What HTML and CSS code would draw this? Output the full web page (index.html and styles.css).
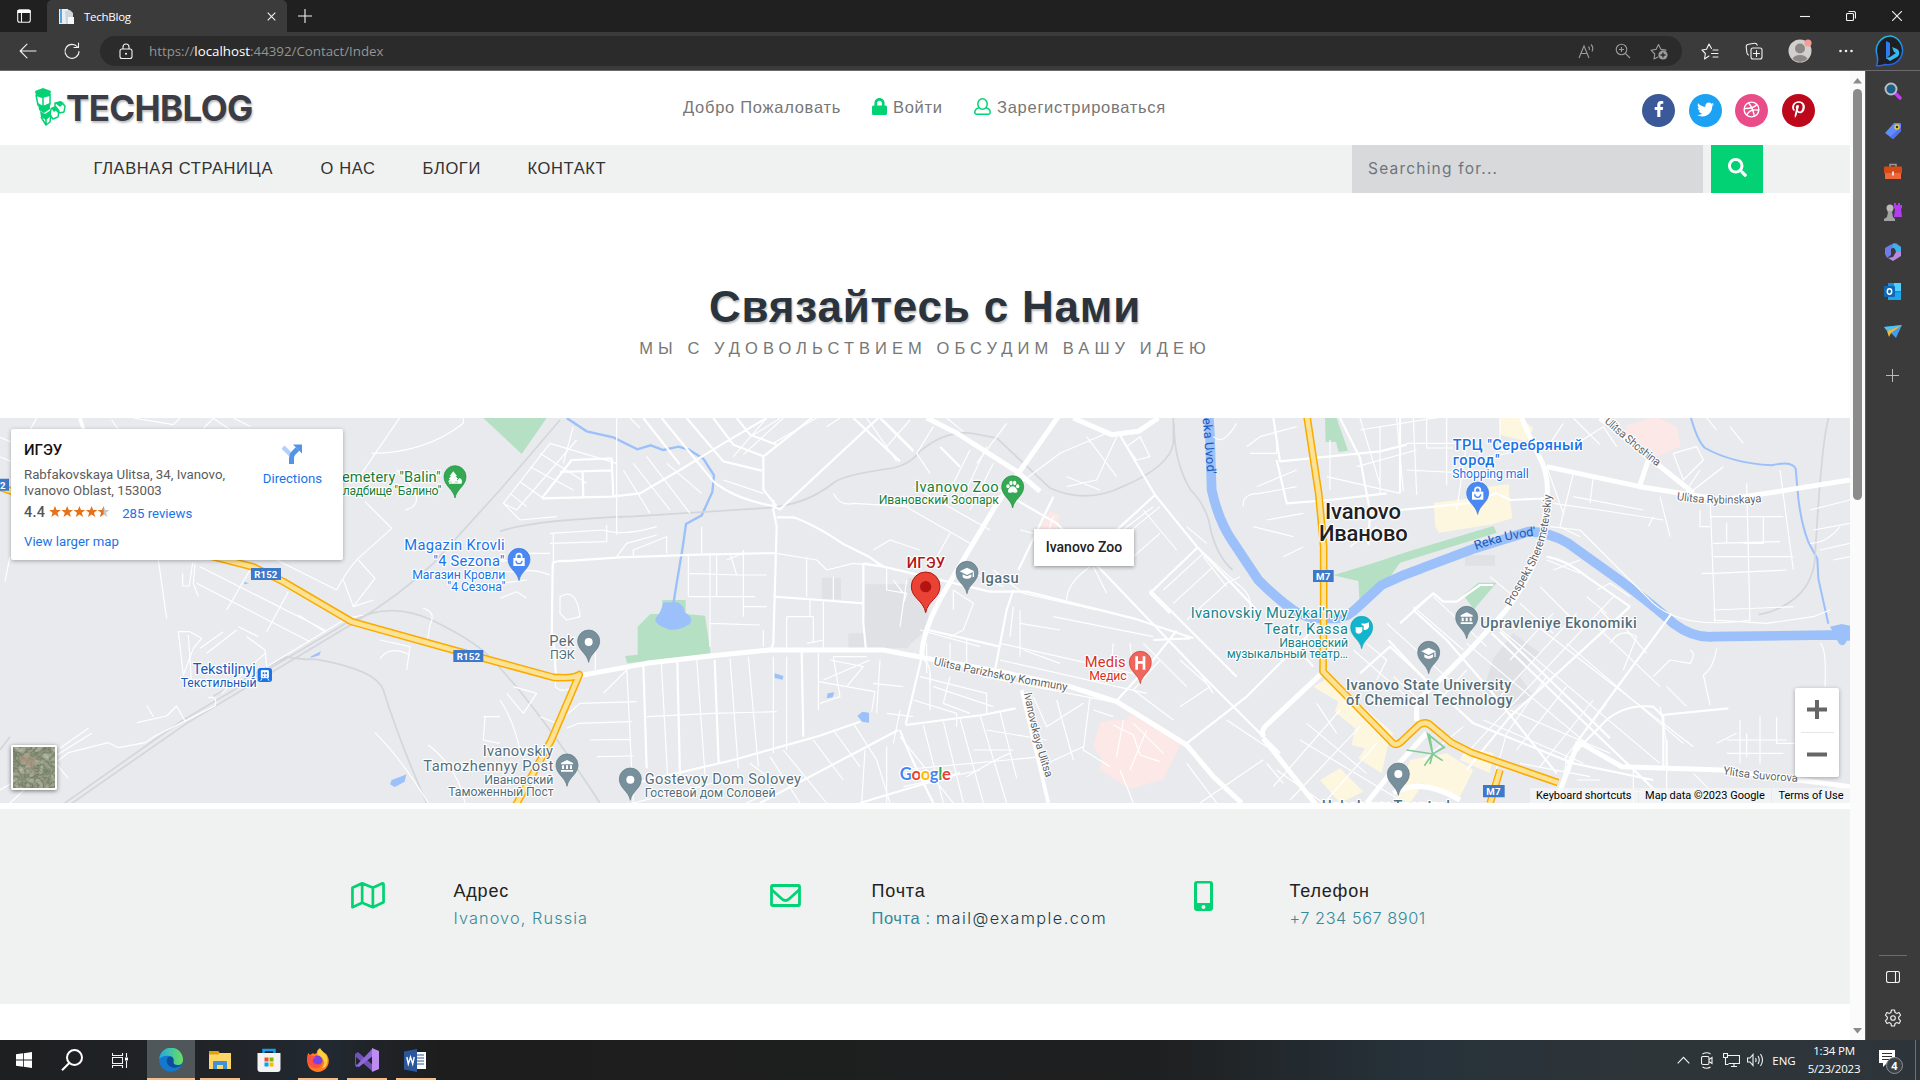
FILE: index.html
```html
<!DOCTYPE html>
<html lang="ru">
<head>
<meta charset="utf-8">
<title>TechBlog</title>
<link rel="stylesheet" href="styles.css">
</head>
<body>
<div class="window">
  <div class="titlebar">
    <span class="cell tab-menu"><svg width="14" height="14" viewBox="0 0 14 14"><rect x=".7" y=".7" width="12.6" height="12.6" rx="2" class="w-line"/><path d="M.5 1h13v3H.5z" fill="#fff"/><path d="M4.5 4v9" class="w-line"/></svg></span>
    <div class="tab">
      <svg width="16" height="17" viewBox="0 0 16 17"><path d="M1 1h9l1 2v13H1z" fill="#e9eef2"/><path d="M2 1h2v14H2z" fill="#5aa5d8"/><path d="M7 3l5-1 3 3v11H8z" fill="#cfd6db"/><path d="M10 9h6v7h-6z" fill="#f5f7f8"/></svg>
      <span class="tab-title">TechBlog</span>
      <svg class="tab-close" width="9" height="9" viewBox="0 0 9 9"><path d="M.7.7l7.6 7.6M8.3.7L.7 8.3" class="w-line"/></svg>
    </div>
    <span class="cell new-tab"><svg width="14" height="14" viewBox="0 0 14 14"><path d="M7 0v14M0 7h14" class="w-line"/></svg></span>
    <span class="grow"></span>
    <span class="cell win-btn"><svg width="10" height="10" viewBox="0 0 10 10"><path d="M0 5.5h10" class="w-line"/></svg></span>
    <span class="cell win-btn"><svg width="10" height="10" viewBox="0 0 10 10"><rect x=".5" y="2.5" width="7" height="7" rx="1" class="w-line"/><path d="M2.5.5h5a2 2 0 0 1 2 2v5" class="w-line"/></svg></span>
    <span class="cell win-btn"><svg width="10" height="10" viewBox="0 0 10 10"><path d="M0 0l10 10M10 0L0 10" class="w-line"/></svg></span>
  </div>

  <div class="toolbar">
    <span class="cell back"><svg width="18" height="16" viewBox="0 0 18 16"><path d="M17 8H1.500M8 1.200L1.200 8 8 14.800" class="w-line r"/></svg></span>
    <span class="cell refresh"><svg width="18" height="18" viewBox="0 0 18 18"><path d="M16 9.500A7 7 0 1 1 14.500 5M15.500 1v4.500H11" class="w-line r"/></svg></span>
    <div class="address">
      <svg width="14" height="17" viewBox="0 0 14 17"><rect x="1" y="6" width="12" height="9.500" rx="2" class="w-line"/><path d="M4 6V4a3 3 0 0 1 6 0v2" class="w-line"/><circle cx="7" cy="10.700" r="1" fill="#fff"/></svg>
      <span class="url">https://<b>localhost</b>:44392/Contact/Index</span>
      <span class="grow"></span>
      <span class="addr-icons">
        <svg width="18" height="16" viewBox="0 0 18 16"><path d="M1 15L6 3l5 12M2.800 10.500h6.500M10.500 3.500c1 1 1 2.500.8 3.500M13 1.500c2 2 2 5 1 7" class="g-line"/></svg>
        <svg width="16" height="16" viewBox="0 0 16 16"><circle cx="6.500" cy="6.500" r="5.300" class="g-line"/><path d="M10.500 10.500L15 15M6.500 4v5M4 6.500h5" class="g-line"/></svg>
        <svg width="18" height="17" viewBox="0 0 18 17"><path d="M8 14l-4 2 .8-5L1 7.200l5-.8L8.500 1.500 11 6.400l5 .7" class="g-line r"/><circle cx="13" cy="12" r="4.600" fill="#9b9b9b"/><path d="M13 9.500v5M10.500 12h5" stroke="#2b2b2b" stroke-width="1.300"/></svg>
      </span>
    </div>
    <span class="cell t-fav"><svg width="18" height="17" viewBox="0 0 18 17"><path d="M8 13l-4.500 3 .9-5.500L1 7l4.500-.8L8 1l2.500 4.500M12 7h5M10.500 10.500H17M12 14h5" class="w-line r"/></svg></span>
    <span class="cell t-col"><svg width="18" height="18" viewBox="0 0 18 18"><rect x="6" y="6" width="11" height="11" rx="2" class="w-line"/><path d="M11.500 8.500v6M8.500 11.500h6M3.500 13A2.500 2.500 0 0 1 2 11L1.200 5A2.500 2.500 0 0 1 3.500 2.200l6-1a2.500 2.500 0 0 1 2.700 2" class="w-line r"/></svg></span>
    <span class="cell t-ava"><svg width="24" height="24" viewBox="0 0 24 24"><circle cx="12" cy="12" r="11.500" fill="#d2cfcc"/><circle cx="12" cy="9.500" r="5" fill="#8c8886"/><path d="M4.500 20a8 6 0 0 1 15 0 11 11 0 0 1-15 0" fill="#8c8886"/><circle cx="20" cy="4" r="3.600" fill="#f99a94"/></svg></span>
    <span class="cell t-dots"><svg width="14" height="4" viewBox="0 0 14 4"><circle cx="1.500" cy="2" r="1.300" fill="#eee"/><circle cx="7" cy="2" r="1.300" fill="#eee"/><circle cx="12.500" cy="2" r="1.300" fill="#eee"/></svg></span>
    <span class="cell t-bing"><svg width="32" height="32" viewBox="0 0 32 32"><defs><linearGradient id="bg" x1="0" y1="0" x2=".3" y2="1"><stop offset="0" stop-color="#1fc8e8"/><stop offset="1" stop-color="#2a5fe0"/></linearGradient></defs><path d="M16 1A14.500 14.500 0 1 1 10 29.500Q5 31.500 1.500 30.500 3.500 26 2 20A14.500 14.500 0 0 1 16 1z" fill="#1d1f23" stroke="url(#bg)" stroke-width="1.500"/><path d="M11 6l4 2v12l-4 4z" fill="#2f7bf0"/><path d="M11 23l4 3 7-4c3-2 3-6 0-8l-5-2 2 5 2 1-6 4z" fill="#35b9ef"/></svg></span>
  </div>

  <div class="middle">
    <div class="viewport">
      <div class="page">
        <header class="top">
          <div class="logo">
            <svg width="31" height="38" viewBox="0 0 31 38"><path d="M0 3L8 0l8 3-1 5-8 2-6-2z" fill="#03d274"/><path d="M1 7l2 10 5 2 7-3V6M8 9v9" class="grn"/><path d="M3 15l5 3 7-3v6l-6 4-5-3zM5 23l5 3 6-4v6l-5 4-5-3z" fill="#03d274"/><path d="M4 18l5 3 6-4M6 29l5 8 4-3 1-7M11 31v6M20 15l6-1 4 4-1 6-5 1-4-4zM16 21l5-2 3 4-1 6-5 2-3-4z" class="grn"/><path d="M20 15l5-2 4 2-4 4zM16 20l4-2 3 3-4 3z" fill="#03d274"/></svg>
            <span>TECHBLOG</span>
          </div>
          <div class="top-links">
            <span>Добро Пожаловать</span>
            <span class="with-icon"><svg width="15" height="17" viewBox="0 0 448 512" preserveAspectRatio="none"><path fill="#03d274" d="M400 224h-24v-72C376 68.200 307.800 0 224 0S72 68.200 72 152v72H48c-26.500 0-48 21.500-48 48v192c0 26.500 21.500 48 48 48h352c26.500 0 48-21.500 48-48V272c0-26.500-21.500-48-48-48zm-104 0H152v-72c0-39.700 32.300-72 72-72s72 32.300 72 72v72z"/></svg>Войти</span>
            <span class="with-icon"><svg width="17" height="17" viewBox="0 0 17 17"><ellipse cx="8.500" cy="6" rx="4.700" ry="5.200" class="grn thin"/><path d="M5 9.700C1.500 10.500.8 12.500.8 14.500a1.700 1.700 0 0 0 1.800 1.700h11.800a1.700 1.700 0 0 0 1.800-1.700c0-2-.7-4-4.200-4.800" class="grn thin"/></svg>Зарегистрироваться</span>
          </div>
          <div class="social">
            <a class="fb"><svg width="10" height="16" viewBox="0 0 320 512"><path fill="#fff" d="M279.140 288l14.220-92.660h-88.910v-60.130c0-25.350 12.420-50.060 52.240-50.060h40.420V6.260S260.430 0 225.360 0c-73.220 0-121.080 44.380-121.080 124.720v70.620H22.890V288h81.390v224h100.170V288z"/></svg></a>
            <a class="tw"><svg width="17" height="17" viewBox="0 0 512 512"><path fill="#fff" d="M459.370 151.716c.325 4.548.325 9.097.325 13.645 0 138.720-105.583 298.558-298.558 298.558-59.452 0-114.680-17.219-161.137-47.106 8.447.974 16.568 1.299 25.340 1.299 49.055 0 94.213-16.568 130.274-44.832-46.132-.975-84.792-31.188-98.112-72.772 6.498.974 12.995 1.624 19.818 1.624 9.421 0 18.843-1.300 27.614-3.573-48.081-9.747-84.143-51.980-84.143-102.985v-1.299c13.969 7.797 30.214 12.670 47.431 13.319-28.264-18.843-46.781-51.005-46.781-87.391 0-19.492 5.197-37.360 14.294-52.954 51.655 63.675 129.300 105.258 216.365 109.807-1.624-7.797-2.599-15.918-2.599-24.040 0-57.828 46.782-104.934 104.934-104.934 30.213 0 57.502 12.670 76.670 33.137 23.715-4.548 46.456-13.320 66.599-25.340-7.798 24.366-24.366 44.833-46.132 57.827 21.117-2.273 41.584-8.122 60.426-16.243-14.292 20.791-32.161 39.308-52.628 54.253z"/></svg></a>
            <a class="dr"><svg width="17" height="17" viewBox="0 0 17 17" fill="none" stroke="#fff" stroke-width="1.400"><circle cx="8.500" cy="8.500" r="7.400"/><path d="M1.200 7.500C6 7.700 11 7 13.800 3.500M5.500 1.700C9 6 10.500 10 11.300 15.200M3.700 14C6 9.500 10.500 8.200 15.800 9.300"/></svg></a>
            <a class="pi"><svg width="13" height="17" viewBox="0 0 384 512"><path fill="#fff" d="M204 6.500C101.400 6.500 0 74.900 0 185.600 0 256 39.600 296 63.600 296c9.900 0 15.600-27.600 15.600-35.400 0-9.300-23.700-29.100-23.700-67.800 0-80.400 61.200-137.400 140.400-137.400 68.100 0 118.500 38.700 118.500 109.800 0 53.100-21.300 152.700-90.300 152.700-24.900 0-46.200-18-46.200-43.800 0-37.800 26.400-74.400 26.400-113.400 0-66.200-93.900-54.200-93.900 25.800 0 16.800 2.100 35.400 9.600 50.700-13.800 59.400-42 147.900-42 209.100 0 18.900 2.700 37.500 4.500 56.400 3.400 3.800 1.700 3.400 6.900 1.500 50.400-69 48.600-82.500 71.400-172.800 12.300 23.400 44.100 36 69.300 36 106.200 0 153.900-103.500 153.900-196.800C384 71.300 298.200 6.500 204 6.500z"/></svg></a>
          </div>
        </header>

        <nav class="nav">
          <div class="menu"><a>ГЛАВНАЯ СТРАНИЦА</a><a>О НАС</a><a>БЛОГИ</a><a>КОНТАКТ</a></div>
          <div class="search"><div class="field">Searching for...</div><div class="go"><svg width="19" height="19" viewBox="0 0 512 512"><path fill="#fff" d="M505 442.700L405.300 343c-4.500-4.500-10.600-7-17-7H372c27.600-35.300 44-79.700 44-128C416 93.100 322.900 0 208 0S0 93.100 0 208s93.100 208 208 208c48.300 0 92.700-16.400 128-44v16.300c0 6.400 2.500 12.500 7 17l99.700 99.700c9.400 9.400 24.600 9.400 33.900 0l28.300-28.300c9.400-9.400 9.400-24.600.1-34zM208 336c-70.700 0-128-57.200-128-128 0-70.700 57.200-128 128-128 70.700 0 128 57.200 128 128 0 70.700-57.200 128-128 128z"/></svg></div></div>
        </nav>

        <section class="hero">
          <h1>Связайтесь с Нами</h1>
          <p>МЫ С УДОВОЛЬСТВИЕМ ОБСУДИМ ВАШУ ИДЕЮ</p>
        </section>

        <section class="map">
          <svg class="map-art" width="1850" height="385" viewBox="0 24 5550 1155">
            <defs>
              <path id="pin" d="M0 64C-5 36-33 28-33 0A33 33 0 1 1 33 0C33 28 5 36 0 64Z"/>
              <g id="cap" fill="#fff"><path d="M-22-6L0-17 22-6 0 5z"/><path d="M-13 3v9q13 9 26 0V3L0 9zM17-3h4v14h-4z"/></g>
              <g id="bank" fill="#fff"><path d="M-18-9L0-18 18-9v4h-36zM-15-2h6v11h-6zM-3-2h6v11h-6zM9-2h6v11H9zM-18 12h36v5h-36z"/></g>
              <g id="bag"><path d="M-17-6h34v24h-34z" fill="#fff"/><path d="M-8-6v-5a8 8 0 0 1 16 0v5" fill="none" stroke="#fff" stroke-width="5"/><path d="M-9 2a9 9 0 0 0 18 0" fill="none" stroke="#4a89f3" stroke-width="4"/></g>
              <path id="prospekt" d="M4534 590Q4560 540 4592 488Q4650 390 4654 250"/>
              <path id="reka2" d="M4428 420Q4510 388 4615 376"/>
              <path id="reka1" d="M3606 0Q3614 110 3622 196"/>
              <path id="parizh" d="M2800 764Q3000 810 3205 843"/>
              <path id="ivul" d="M3072 850Q3095 980 3140 1110"/>
              <path id="shosh" d="M4812 36Q4880 100 4975 172"/>
              <path id="ryb" d="M5030 270Q5150 288 5288 276"/>
              <path id="suv" d="M5168 1093Q5280 1110 5395 1116"/>
            </defs>
            <rect y="0" width="5550" height="1200" fill="#e8eaed"/>

            <!-- built-up blocks, hospitals and shops -->
            <path fill="#dfe1e5" d="M2595 523h130v-20l60 10v140l-65 60-70-5-60 5zM2465 503h58v65h-58zM2545 670h180v45h-180zM4395 435h90v32h-90zM4480 745l60-75 80 60-60 70 40 60-80 40-70-60z"/>
            <path fill="#fce8e6" d="M3150 304l28 12-8 44h-55zM3300 938l45-10 30 5 15-20 155 85-55 110-100 30-92-60 10-25-28-45zM4880 45l90-25 60 30 12 60-90 38-30-50-45-15z"/>
            <path fill="#fef7e0" d="M4302 278l100-12 55-35 70-8v22l10 80-60 18-160 25-12-20zM4500 24h60l40 30-20 40-80-20zM3940 830l50-30 190 170-15 30-20 90-70-45 20-30-40-10 10-50-60-50 10-30zM3960 1110l60-35 70 70-70 34zM4230 1050l110-20 80 50-40 80-110-40-40 60-40-20zM4400 1010l80 20-10 60-90-40z"/>

            <!-- parks -->
            <path fill="#b5e0c3" d="M1450 24h190l-75 108zM1875 738l38-4V650l38-38h36v-42h70v42l58 5 17 113-250 30zM3975 24h35l34 98-28 4-8-30h-31zM4000 496l130-40 90-30 100-30 160-48 10 20-160 50-130 40-70 100-50 35-5-80zM4390 556l45-38h55l-68 80z"/>

            <!-- water -->
            <path fill="none" stroke="#9cc0f9" stroke-width="29" stroke-linejoin="round" d="M3625 0l5 80 5 160q20 90 60 150l80 120q70 70 120 100l40 15h80q30-5 60-35l70-65q60-30 120-50l160-60 160-50q60 0 120 35l160 115q100 75 155 125 60 45 120 40l350-5 60 3"/>
            <path fill="#9cc0f9" d="M5490 650l35-8 25 5v42h-8q-10 25-25 12l-10-20zM1990 577h42q20 8 22 30 30 18 15 35-30 20-60 17-50-15-42-35 16-15 23-47zM1175 1110l32-12 12-5-5 22-30 16-14-8zM935 738l28-14-5 12-28 8zM733 515l14 5-14 3zM2324 790l26 8-2 11-24-5zM2483 850l20-3-5 15-18 3zM2572 918l15-13 20 3v30l-20-3z"/>
            <g fill="none" stroke="#9cc0f9" stroke-width="7">
              <path d="M1700 24l60 40 80 18 72 36 40-12 38 14 45-10 30 8 45 28 32 50-5 50-32 70-47 26-10 70-20 120-8 50"/>
              <path d="M5073 24q20 70 42 90 80 45 200 52 60-15 72 10l8 90q10 80 30 130l27 50 3 60 30 135" stroke-width="6"/>
            </g>

            <!-- railways -->
            <g fill="none" stroke="#d3d6da" stroke-width="5">
              <path d="M0 1330L560 940 1060 640Q1200 555 1300 460L1500 240 1680 30M0 1316L540 936 1050 632M640 858L860 740Q900 750 950 748 1130 780 1150 840 1200 1000 1280 1179M1060 632q110-60 240 0 120 60 160 100 140 140 340 447M0 1020l30-40"/>
              <path d="M1500 364q100-35 400-45l400-25q120-10 200-75 30-25 180-45 50-10 80-50 70-60 150-55l80 15 160 150q110 50 220-5 140-60 150-130V24M3522 40q0 120 50 200 50 50 60 120 20 80 66 120M5486 24q-20 60-40 400 0 90-60 140-50 40-110 50"/>
            </g>

            <!-- residential streets -->
            <g fill="none" stroke="#fff" stroke-width="3.500" stroke-linejoin="round">
              <path d="M475 450l25 175M110 24L90 60M335 30q30 50 70 55M400 24l120 20 20-20M610 55l30-30 60 40M700 24l50 25M0 82l35 15M0 140l35 15M30 440L15 515"/>
              <path d="M600 470l375 190M590 520l340 175M585 460l-5 60 15 40M680 600l70-120M800 665l65-120M830 450l180 90M1010 540q30-60 65-95l100-90-80-80M1075 450l50 55-65 85 60-20M1060 590l-30-80M548 490v38h20l10-70M535 665l15 130 30-80 25-30-35-20zM565 675l10 150M600 715l70-50M620 730l90-70M715 650l60 30M800 770l-5-50-55-40M665 850l130-120M975 665l-80-50M800 770l240-145 50-10"/>
              <path d="M1215 0l-130 190M1215 300q80-20-25-120M1115 130q160 0 275-90V24M410 938l90-20 30-30 25 45 90-45q10-30-20-25M555 933l-90 45-30 20-80 15-30-15-120 30-90 70M440 885l20 35M170 1050L30 1179M265 955l-85 60M275 970L155 1045l50 60M0 1140l140-80M1125 968q80 80 160 211M1285 1005q90 70 110 174M1140 690l90 20-10 70M1140 745q30-40 90-10M1270 595q40 10 20 50l-10 60M1450 920h50M1455 920l-5 70 50 10"/>
              <path d="M1650 100l200 60M1620 130l140 90M1590 170l130 70M1560 215l70 50M1530 250l50 40M1650 100l-140 180M1850 24v350M1730 90l-180 210-40-20 50 50 110-10M1720 50l-30 110M1870 180l80 130M1900 160l110 140M1940 140l130 170M2000 160l105 90M1890 24l30 30M2170 210l120 40M2300 24L2200 140M2350 24l-120 110"/>
              <path d="M2600 24l90 130M2480 50l40-26M2320 100l130-76M2260 75l80-50M2660 110l70-80M2740 120l-90-90M1650 370l160-10q60 20 160-10M1650 400l170-5V345M1650 430l-120 0M1660 370v110M1850 440l30-40 90-25M1900 440v-20l100-40v50M2105 430v-80M2065 430v130h200M2065 490l150 5M2130 430v280M2150 430v130M2190 430l20 65h90M2230 420v200M2230 590h70M2230 490v-60l-50 20M2130 640l150 5M2290 660v50M2330 430l120 20 30 30 80-20 90 10M2420 440v120M2470 570v150M2360 620v100M2360 620h80v80M2430 570v50M2420 700l50-10M2500 500v70M2660 470v70l60 10-10 30M2680 510l30 40M1500 485h60q40-10 90 10M1500 520l80-10M1500 565l50-20 30 20M1680 560q50-30 60 60l-40 10-20-20zM1580 440l-80 15"/>
              <path d="M1666 800v30q30 30 70-20M1786 780v-60M1740 880l170-5M1810 850l70-70M1740 880l-70 60-50-20M1700 955l35-15 160-5M1770 990l120-2M1790 1040l110-2M1500 870q40 60 60 150M1520 850l50 60 40-60-70-20M1880 770l20 409M1984 760l20 360M2090 745l25 350M2190 745l25 330M2245 740l30 330M1940 920l200-10 190-5M2320 740v290M2360 740v280M2455 730v170M2455 815l170 30-10 60M2470 810l140-60M2640 750l-10 160M2540 830l50-60-100-20M2620 820l90 10M2500 740l20 120-60 20M2660 910l80 10M2700 900l-20 100M2740 730q60 20 50 90M2600 740h-100"/>
              <path d="M2740 870l130 40v40M2760 800l200 50v60M2800 830l180 60M2790 900v-110M2850 800l-20 80 80 30M1900 1179l280-70M2250 1060l80 60M2310 1040l90 139M2350 1020l130 159M2440 990l90 120M2500 960l80 110M2560 940l70 110M2585 1179l10-160M2660 1179v-170M2300 1150l-60 29M2630 1050l40 129M2700 980l160 199M2770 945l60 234M2830 935l60 244M2880 925l70 254M2940 915l80 264M3000 905l50 200M2700 1080l430-40M2710 1130l230-50M2920 1020l120 0"/>
              <path d="M2840 24l50 40M2790 190l-40-60 50-80M2840 260l70-140M2880 280l80-170M2910 300l70-140M2700 280l210 120M2740 230l230 130M2500 250q20 40 60 30l170 10M2620 420l50-30 90 30M2850 370l-50 90M2880 470l130 60M2860 600v-60l60 40-30 80-40 20M2700 650l20-140M2760 660l180 50M2780 700v90M2850 700v70M2900 690v90"/>
              <path d="M3020 40l-90 120M3060 220l120-90 140-60M3200 200l100 40M3380 110l40-30 30 60-40 10zM3350 80l-60 130-90 20M3260 80l90 120M3060 360l80 20 20-60M3040 590l-10 90M3060 640l120 20M2980 480l90 70 220 50M3200 570q0-50 70-100M3280 470l40 80M3290 420l170-130M3370 380l110-90M3400 440l80-70M3430 300l100 120M3560 350l60 50M3490 540l120-110M3520 580l120-110M3560 630l120-110 40-20M3580 400l130 120q70 50 20 110M3610 440l70 90"/>
              <path d="M3000 750l440 100M2950 800l410 80M3000 700l400 90M3160 620l300 60M3180 760l-110-40M3060 600v140M3340 700l-10 100M3390 700l10 90M3430 700l130 130M3480 750l-80 90 120 90M3540 750l90 80-90 60M3600 790l40 60M3270 860l-20 160 80 50M3280 900l60 20M3250 1010l-130 60M3360 1080l40 99M3560 1060l90 119M3600 1179l190-130M3100 860l40 90 110-70M3170 870l50 180M2960 960l180 30M2900 1100q100-60 130-70"/>
              <path d="M3340 945l60 30 20 60 60 20M3370 930l-20 110M3400 940l90 90M3440 960l-50 120M3640 80q30 30 70-40M3740 110l40-30 110-30M3750 130h80v-30M3730 290q-5-40 50-40l110-20M3760 350l120 30M3770 230l120-50M3800 330l110-20M3850 440l60-30M3990 90v150M4140 50v200M4190 24l20 220M4080 24l60 200M3980 200l220 50M4250 120l-180 50M4080 60l250-40M4060 320l120-20M4130 350l-80 60"/>
              <path d="M4220 100h220v60M4220 180l200 10M4240 24l10 230M4340 24v200M4400 100l-30 200M4280 24v90h80M4440 150l120-30M4500 24v80M4600 100q-60 30-100 20M4650 100l40-60M4720 24l80 80M4700 120l110-70 40 60M4640 170l50 140M4720 190l-40 160 60 30M4780 200l-10 80M4660 280l140 20 190 30M4720 260l210 40M4980 260l30 120M4960 320l-15 30M5020 130l70-20 20 40-60 60zM5100 180l-40 60M5080 240l90-70M5100 300v50h30M5150 60l-30-36M5230 100l-40-50"/>
              <path d="M5130 260l15 380M5240 220l10 420M5340 180l40 300M5130 320l220 0M5140 400l200-5M5140 440l240 0M5140 490l220-10M5105 490h40M5140 600l240-10M5140 630l160 10M5290 320v80h-60M5180 340v60M5430 300l120-30M5440 360l110-20M5430 400q50 0 90-50M5460 420l90-20M5500 450l50-10M5300 640l140-20 50-20M4650 350l90 10 220 220q90 80 290 50M4660 480l80-30M4790 540l40-20 60 40M4760 560l60 50M4860 660l-60-60"/>
              <path d="M4470 500l60 50M4560 580l100 90M4620 530l100 100M4640 450l100 40M4840 560l-450 480M4730 610l-240 260M4660 610l-130 140M4240 590l150 130M4300 560l160 150M4160 640l200 180M4060 720l160 140M4100 700l60 50-30 60M4180 800l90 80M4400 700l360 300M4480 640l500 420M4600 640l480 370M4700 700l350 300M4780 640l200 190M4640 800l-120 170-60 209M4700 830l-150 190M4780 870l-160 200M4820 880l-130 170M4450 930l300 130M4530 900l300 130M4400 780l-90 100M4390 950l-120 100"/>
              <path d="M4830 700q30-50 80-20l-40 100M4880 660l60 70M4960 800l50-50 60 10q20-30 0-40M5150 715q-10 60-40 80l20 90M5460 700q20 10 15 130M5000 830l60 60M5000 1000l-20-110M5220 930v130M5280 920v140M5330 920v80h60M5180 990h180M5180 1030h170M5240 970v70M4700 1040l-20 139M4900 1080v99M5000 1080v99M5080 1090l60 60M4880 1140l140 20M4560 1060l210 40M4730 1110h70M5150 1000l60-30M3680 930l120 80M3950 880l60 90M4020 900l-200 230M4080 950l-210 220M4130 1000l-150 170M3900 990l300 180M3830 1080l140 99M3920 940l180 150M3800 1060l50 60"/>
            </g>

            <!-- collector streets -->
            <g fill="none" stroke="#fff" stroke-width="6.500" stroke-linejoin="round">
              <path d="M1625 265l90-115 120-5M1625 265l210-5 85-10 120-70 130-80 130-76M1680 186l155-5M1835 145l5 115M1748 186l2 75M1930 24l110 140M1985 24l155 190q60 50 170 72l30 12 430-400M2060 24l110 130 115 28M2140 24l60 80 90 35 0 100 40 50M2210 24l40 50 80 30M2290 140l150-120M2320 270l0 30 10 50-10 350-8 20M1655 700l3-240q5-8 60-8l140-10 240-8 230-5M2320 560l140 10 130 10M2590 460v180l8 80M2590 460l60 10 320 75 110 0 320 80 180 60M1668 800l-8-120M1930 765l10 310M2032 755l8 345M2144 750l12 310M2405 725l5 255M2765 742l-48 200M2700 960q20 60 100 219M2330 322h50q60 20 150 80l80 40q40 30 50 30"/>
              <path d="M2560 24l140 130M2640 24l100 100M1900 1120l300-70 250-70 130-45M2717 945l230-30 100-20M2695 960l-415 219M2580 1179l300-90M2785 660l215 50M3040 540l-20 60-35 180M2880 170l-60-60M2980 230l190 110 430 450 240 240M3160 260l-105 220M3360 75l105 180 130 160 180 190M3465 255l-120 110M3595 410l-145 140 60 60M3350 872l100-110 80-100M3460 690l110-5M3560 1000l180-140 200-200M3450 540l260 260"/>
              <path d="M3830 150l30 130 130-10 170-20M3820 24l20 130 300-30 80-20M4020 24l60 120 30 160-5 100M4200 250v-226M3880 700l60 70M4165 690l130 140M4240 600l100 90 130 150 200 250M4240 600l60-50 30 25h40l70-50h40"/>
              <path d="M4200 300l200-20 90-30 40 20 110-5M4640 440q60 10 120 60l130 90M4475 670l260 250 250 240M4500 665l330 320M4080 790l90-80 250 230 300 120 240 50M4890 590l-360 330-130 160M4735 990l280-380M4700 1060l50-60 50-50q60-70 160-60l30 30v160M4985 915l200-20M5000 990v85M4200 640l100-90"/>
            </g>

            <!-- arterial streets -->
            <g fill="none" stroke="#fff" stroke-width="15" stroke-linejoin="round">
              <path d="M1740 797l200-37 190-22 180-18h340l115 22 235 43 210 45 140 45 210 130 80 95 85 79M2765 742q0-80 70-200l65-110 90-150 120-170 70-100M2780 24l90 45 180 115 70 60" />
              <path d="M3220 24l115 50 80-10 60-40M3790 980q-10-20 15-40l160-150M3790 985l190 240M4100 1179l80-100 100-110M4565 24q30 70 50 110 35 60 25 140l-15 120q-30 110-110 210l-100 110-100 100-65 60v60"/>
              <path d="M4640 170l280 60 250 40 130-20 250-40M4920 225l25-75M4800 24l280 225M4670 1170l65-175M4735 995l130 75 300 10 385 50M4180 1150q80-50 200 20"/>
              <path d="M240 24l12 40M3065 840l80 339" stroke-width="11"/>
            </g>

            <!-- highways -->
            <g fill="none" stroke="#f9ab00" stroke-width="23" stroke-linejoin="round">
              <path d="M0 232l60 20M600 430l160 41 90 44 205 120 305 85 300 82q60 5 78-8l-85 198-120 220"/>
              <path d="M3918 0l38 250 15 160v200l-2 175 210 215q10 8 25-5l55-52q20-10 35 5l60 50 60 30 130 45 130 45M4500 1080l-30 100"/>
            </g>
            <g fill="none" stroke="#fde293" stroke-width="14" stroke-linejoin="round">
              <path d="M0 232l60 20M600 430l160 41 90 44 205 120 305 85 300 82q60 5 78-8l-85 198-120 220"/>
              <path d="M3918 0l38 250 15 160v200l-2 175 210 215q10 8 25-5l55-52q20-10 35 5l60 50 60 30 130 45 130 45M4500 1080l-30 100"/>
            </g>
            <path d="M4220 1020l78 12 35-20-50-40 15 60-25 35M4298 1032l-8 30M4298 1032l30 20M4298 1032l-10-60" fill="none" stroke="#81c995" stroke-width="5"/>

            <!-- route shields -->
            <g fill="#3d78c9"><path d="M-20 206h47v36h-47zM753 474h90v36h-90zM1360 720h90v36h-90zM3939 480h62v36h-62zM4449 1125h65v37h-65z"/></g>
            <g class="shield"><text x="0" y="236">2</text><text x="763" y="503" textLength="69">R152</text><text x="1370" y="749" textLength="70">R152</text><text x="3948" y="509" textLength="43">M7</text><text x="4459" y="1155" textLength="43">M7</text></g>

            <!-- place markers -->
            <g stroke="#5d7580" stroke-width="2" fill="#78909c"><use href="#pin" x="1766" y="693"/><use href="#pin" x="1701" y="1065"/><use href="#pin" x="1891" y="1107"/><use href="#pin" x="2901" y="487"/><use href="#pin" x="4286" y="727"/><use href="#pin" x="4400" y="622"/><use href="#pin" x="4195" y="1092"/></g>
            <g fill="#34a853" stroke="#1e8e3e" stroke-width="2"><use href="#pin" x="1365" y="200"/><use href="#pin" x="3038" y="230"/></g>
            <g fill="#4a89f3" stroke="#3a78e0" stroke-width="2"><use href="#pin" x="1557" y="448"/><use href="#pin" x="4433" y="249"/></g>
            <use href="#pin" x="3421" y="757" fill="#ee675c" stroke="#d93025" stroke-width="2"/><use href="#pin" x="4085" y="652" fill="#12b5cb" stroke="#129eaf" stroke-width="2"/>
            <g fill="#fff"><circle cx="1766" cy="696" r="12"/><circle cx="1891" cy="1109" r="12"/><circle cx="4195" cy="1092" r="12"/></g>
            <use href="#cap" x="2901" y="490"/><use href="#cap" x="4286" y="730"/><use href="#bank" x="1701" y="1068"/><use href="#bank" x="4400" y="625"/><use href="#bag" x="1557" y="450"/><use href="#bag" x="4433" y="251"/>
            <path fill="#fff" d="M3406 739h8v14h14v-14h8v40h-8v-18h-14v18h-8zM1360 184l11 14h-4l7 9h-4l6 8h-12v5h-8v-5h-12l6-8h-4l7-9h-4zM1378 205q8 0 8 12h-12q-2-10 4-12zM1347 217h38v4h-38zM4067 650q9 4 20 0v14q-10 14-20 2zM4085 640q10 3 22-3v14q-5 12-16 8v-12l-6-2z"/>
            <g fill="#fff"><ellipse cx="3024" cy="229" rx="5" ry="6"/><ellipse cx="3033" cy="219" rx="5" ry="6.500"/><ellipse cx="3044" cy="219" rx="5" ry="6.500"/><ellipse cx="3053" cy="229" rx="5" ry="6"/><path d="M3038 229q8 0 14 12 2 9-8 7-6-2-12 0-10 2-8-7 6-12 14-12z"/></g>
            <path d="M2777 608C2770 570 2734 565 2734 529A43 43 0 1 1 2820 529C2820 565 2784 570 2777 608Z" fill="#ea4335" stroke="#b31412" stroke-width="3"/><circle cx="2777" cy="530" r="17" fill="#b31412"/>
            <rect x="773" y="774" width="43" height="42" rx="8" fill="#1a73e8"/><path d="M784 782h21v21h-21zM786 805l-4 7M803 805l4 7" fill="#fff" stroke="#fff" stroke-width="3"/><path d="M788 787h5v6h-5zM796 787h5v6h-5zM788 797h4v3h-4zM797 797h4v3h-4z" fill="#1a73e8"/>

            <!-- labels -->
            <g class="label green"><text x="1026" y="217" textLength="296">emetery "Balin"</text><text x="2745" y="245" textLength="251">Ivanovo Zoo</text><g class="sub"><text x="1028" y="255" textLength="296">ладбище "Балино"</text><text x="2636" y="282" textLength="361">Ивановский Зоопарк</text></g></g>
            <g class="label blue"><text x="1213" y="421" textLength="301">Magazin Krovli</text><text x="1300" y="468" textLength="213">"4 Sezona"</text><g class="sub"><text x="1237" y="506" textLength="279">Магазин Кровли</text><text x="1342" y="543" textLength="174">"4 Сезона"</text><text x="4357" y="203" textLength="229">Shopping mall</text></g><g class="med"><text x="4358" y="119" textLength="390">ТРЦ "Серебряный</text><text x="4358" y="165" textLength="141">город"</text></g></g>
            <g class="label navy"><text x="578" y="793" textLength="189">Tekstiljnyj</text><text class="sub" x="542" y="830" textLength="228">Текстильный</text></g>
            <g class="label slate"><text x="1448" y="1038" textLength="211">Ivanovskiy</text><text x="1270" y="1084" textLength="390">Tamozhennyy Post</text><text x="1648" y="709" textLength="75">Pek</text><text x="1934" y="1123" textLength="469">Gostevoy Dom Solovey</text>
              <g class="sub"><text x="1453" y="1122" textLength="207">Ивановский</text><text x="1345" y="1158" textLength="316">Таможенный Пост</text><text x="1650" y="746" textLength="74">ПЭК</text><text x="1934" y="1160" textLength="393">Гостевой дом Соловей</text></g>
              <g class="med"><text x="2943" y="519" textLength="113">Igasu</text><text x="4038" y="841" textLength="496">Ivanovo State University</text><text x="4038" y="886" textLength="500">of Chemical Technology</text><text x="4441" y="655" textLength="469">Upravleniye Ekonomiki</text><text x="3966" y="1203" textLength="384">Uchebnyy Tsentral</text></g></g>
            <g class="label crimson"><text class="med" x="2720" y="473" textLength="115">ИГЭУ</text></g>
            <g class="label red"><text x="3254" y="771" textLength="123">Medis</text><text class="sub" x="3268" y="809" textLength="112">Медис</text></g>
            <g class="label teal"><text x="3572" y="625" textLength="471">Ivanovskiy Muzykal'nyy</text><text x="3792" y="671" textLength="252">Teatr, Kassa</text><g class="sub"><text x="3838" y="710" textLength="206">Ивановский</text><text x="3680" y="745" textLength="364">музыкальный театр…</text></g></g>
            <g class="label city"><text x="3975" y="326" textLength="228">Ivanovo</text><text x="3957" y="393" textLength="266">Иваново</text></g>
            <g class="label street"><text><textPath href="#parizh" textLength="408">Ulitsa Parizhskoy Kommuny</textPath></text><text><textPath href="#ivul" textLength="262">Ivanovskaya Ulitsa</textPath></text><text><textPath href="#prospekt" textLength="362">Prospekt Sheremetevskiy</textPath></text><text><textPath href="#shosh" textLength="208">Ulitsa Shoshina</textPath></text><text><textPath href="#ryb" textLength="256">Ulitsa Rybinskaya</textPath></text><text><textPath href="#suv" textLength="226">Ylitsa Suvorova</textPath></text></g>
            <g class="river"><text><textPath href="#reka1" textLength="194">Reka Uvod'</textPath></text><text><textPath href="#reka2" textLength="186">Reka Uvod'</textPath></text></g>
            <text class="google" x="2699" y="1109" textLength="154"><tspan fill="#4285f4">G</tspan><tspan fill="#ea4335">o</tspan><tspan fill="#fbbc04">o</tspan><tspan fill="#4285f4">g</tspan><tspan fill="#34a853">l</tspan><tspan fill="#ea4335">e</tspan></text>
          </svg>

          <div class="place-card">
            <div class="place-info">
              <h2>ИГЭУ</h2>
              <p>Rabfakovskaya Ulitsa, 34, Ivanovo,<br>Ivanovo Oblast, 153003</p>
              <div class="rating"><b>4.4</b><svg width="60" height="12" viewBox="0 0 60 12"><defs><path id="star" d="M6 0l1.600 4h4.200L8.400 6.700 9.700 11 6 8.500 2.300 11l1.300-4.300L.2 4h4.200z"/></defs><g fill="#e7711b"><use href="#star"/><use href="#star" x="12.200"/><use href="#star" x="24.400"/><use href="#star" x="36.600"/></g><use href="#star" x="48.600" fill="#c7c7c7"/><path d="M54.600 0v8.500L50.900 11l1.300-4.300L48.800 4H53z" fill="#e7711b"/></svg><a>285 reviews</a></div>
              <a class="larger">View larger map</a>
            </div>
            <div class="directions"><svg width="20" height="20" viewBox="0 0 20 20"><path d="M1 3l8 8" stroke="#b3d1f7" stroke-width="4.500"/><path d="M9.500 20v-6q0-3 2-5l4-4" fill="none" stroke="#5494e8" stroke-width="5"/><path d="M11 .5h9v9z" fill="#5494e8"/></svg><a>Directions</a></div>
          </div>
          <div class="tooltip">Ivanovo Zoo</div>
          <div class="satellite"><svg width="42" height="41" viewBox="0 0 42 41"><filter id="terrain"><feTurbulence baseFrequency=".16" numOctaves="4" seed="8"/><feColorMatrix values=".45 0 0 0 .13  .42 0 0 0 .17  .36 0 0 0 .1  0 0 0 0 1"/></filter><rect width="42" height="41" filter="url(#terrain)"/><path d="M6 10l8-3 9 5-1 7-6 3-3-5-6-1zM17 20l6 5-4 4z" fill="#b09a84" opacity=".6"/></svg></div>
          <div class="zoom"><svg width="44" height="89" viewBox="0 0 44 89"><path d="M12 21.500h20M22 12v19M12 66.500h20" stroke="#666" stroke-width="4"/><path d="M6 44.500h33" stroke="#e6e6e6"/></svg></div>
          <div class="credits"><span>Keyboard shortcuts</span><span>Map data ©2023 Google</span><span>Terms of Use</span></div>
        </section>

        <section class="contacts">
          <div class="contact"><div class="c-icon"><svg width="34" height="28" viewBox="0 0 35 28"><path d="M1.500 6.500l10-4.500v20l-10 4.500zM11.500 2l11 4.500v20L11.500 22M22.500 6.500l10-4.500q1 0 1 1v18.500l-11 5" class="grn wide"/></svg></div><div><h3>Адрес</h3><p>Ivanovo, Russia</p></div></div>
          <div class="contact"><div class="c-icon i2"><svg width="31" height="23" viewBox="0 0 31 23"><rect x="1.500" y="1.500" width="28" height="20" rx="1" class="grn wide"/><path d="M2 6l10 9q3.500 3 7 0L29 6" class="grn wide"/></svg></div><div><h3>Почта</h3><p class="mail"><span class="mail-label">Почта : </span><a>mail@example.com</a></p></div></div>
          <div class="contact"><div class="c-icon i3"><svg width="19" height="30" viewBox="0 0 19 30"><path fill="#03d274" fill-rule="evenodd" d="M3 0h13a3 3 0 0 1 3 3v24a3 3 0 0 1-3 3H3a3 3 0 0 1-3-3V3a3 3 0 0 1 3-3zm0 2.500V22h13V2.500zM9.500 24a2 2 0 1 0 0 4 2 2 0 0 0 0-4z"/></svg></div><div><h3>Телефон</h3><p class="phone">+7 234 567 8901</p></div></div>
        </section>
      </div>
      <div class="scroll"><svg width="9" height="6" viewBox="0 0 9 6"><path d="M0 5.500L4.500 0 9 5.500z" fill="#8b8b8b"/></svg><div class="thumb"></div><span class="grow"></span><svg width="9" height="6" viewBox="0 0 9 6"><path d="M0 0l4.500 5.500L9 0z" fill="#8b8b8b"/></svg></div>
    </div>

    <aside class="side">
      <span><svg width="18" height="18" viewBox="0 0 18 18"><path d="M11 11l5 5" stroke="#c33cf0" stroke-width="3.500" stroke-linecap="round"/><circle cx="7" cy="7" r="5.500" fill="#1c5f86" stroke="#b9bec4" stroke-width="2"/></svg></span>
      <span><svg width="18" height="18" viewBox="0 0 18 18"><path d="M10 1h6l1 1v7l-8 8-8-6z" fill="#5f8dfa"/><path d="M9 17l8-8V5L6 15z" fill="#5271f2"/><circle cx="13" cy="5" r="2" fill="#333" stroke="#f6c62c" stroke-width="1.500"/></svg></span>
      <span><svg width="18" height="18" viewBox="0 0 18 18"><path d="M6 5V2.500h6V5" fill="none" stroke="#9b9b9b" stroke-width="1.500"/><rect y="4.500" width="18" height="7" rx="1" fill="#d54a17"/><path d="M1 11h16v6H1z" fill="#f0653a"/><path d="M8 9.500h2v4H8z" fill="#ddd"/></svg></span>
      <span><svg width="18" height="18" viewBox="0 0 18 18"><path d="M10 0h2v2h2V0h2v2h2v3l-1 1 1 8h-8l1-8-1-1z" fill="#b43cf0"/><circle cx="6" cy="5" r="3.500" fill="#bbb"/><path d="M3 8h6l-1 1 1 5 2 2v2H0v-2l3-2 1-5z" fill="#a3a3a3"/></svg></span>
      <span><svg width="18" height="18" viewBox="0 0 18 18"><path d="M6 2l6-2 5 4v6l-4-3-3-3-3 2v6l-4 3-2-4V5z" fill="#6e7de8"/><path d="M9 0l8 4v7l-5-2-1-3-3-2z" fill="#3cb2ec"/><path d="M17 9v4l-8 5-5-3 5-1 3-5z" fill="#b98adf"/></svg></span>
      <span><svg width="18" height="18" viewBox="0 0 18 18"><path d="M4 0h13v17H4z" fill="#1490df"/><path d="M10 0h7v8h-7z" fill="#50d0fc"/><path d="M4 11l13-2v8H4z" fill="#1ca6eb"/><rect y="3" width="11" height="11" rx="1" fill="#0f67b8"/><ellipse cx="5.500" cy="8.500" rx="2.200" ry="2.700" fill="none" stroke="#fff" stroke-width="1.500"/></svg></span>
      <span><svg width="18" height="14" viewBox="0 0 18 14"><path d="M0 2L18 0l-6 13-4-4z" fill="#3f9cf0"/><path d="M18 0L3 6l2 6 2-4z" fill="#f5b92c"/><path d="M0 2L18 0 3 6z" fill="#49c4f4"/></svg></span>
      <span class="plus"><svg width="13" height="13" viewBox="0 0 13 13"><path d="M6.500 0v13M0 6.500h13" stroke="#bbb"/></svg></span>
      <i class="grow"></i>
      <span class="rule"></span>
      <span class="panel"><svg width="14" height="12" viewBox="0 0 14 12"><rect x=".5" y=".5" width="13" height="11" rx="2" class="w-line"/><path d="M9.500 0v12" class="w-line"/></svg></span>
      <span class="gear"><svg width="18" height="18" viewBox="0 0 18 18"><path d="M7.500 1h3l.6 2.500 1.500.9 2.500-.8 1.500 2.600-1.900 1.900v1.800l1.900 1.900-1.500 2.600-2.500-.8-1.500.9L10.500 17h-3l-.6-2.500-1.500-.9-2.500.8-1.500-2.600 1.900-1.900V8.100L1.400 6.200l1.500-2.600 2.500.8 1.500-.9z" class="w-line r"/><circle cx="9" cy="9" r="2.300" class="w-line"/></svg></span>
    </aside>
  </div>

  <div class="taskbar">
    <span class="task narrow"><svg width="16" height="16" viewBox="0 0 16 16"><path d="M0 2.300l7-1v6.200H0zM7.800 1.200L16 0v7.500H7.800zM0 8.400h7v6.300l-7-1zM7.800 8.400H16V16l-8.200-1.200z" fill="#fff"/></svg></span>
    <span class="task narrow"><svg width="22" height="22" viewBox="0 0 22 22"><circle cx="13.500" cy="8.500" r="7.500" fill="none" stroke="#fff" stroke-width="2"/><path d="M8.300 14L1 21.300" stroke="#fff" stroke-width="2"/></svg></span>
    <span class="task narrow"><svg width="17" height="15" viewBox="0 0 17 15"><path d="M.5 0v2.500h10V0M.5 15v-2.500h10V15M.5 4.500h10v6H.5zM14.500 0v4M14.500 8v7" class="w-line"/><path d="M13 4.500h3v3h-3z" fill="#fff"/></svg></span>
    <span class="task run active"><svg width="24" height="24" viewBox="0 0 24 24"><defs><linearGradient id="edge"><stop offset="0" stop-color="#21a8e6"/><stop offset="1" stop-color="#6be05c"/></linearGradient></defs><circle cx="12" cy="12" r="11.800" fill="#1478cf"/><path d="M.3 11A11.800 11.800 0 0 1 24 12c0 4-4 6-8 4.500-2-.8-.5-2-1-4.500-1-5-10-6-14.700-1z" fill="url(#edge)"/><path d="M8 11c-1.500 5 4 10 9 8.500 3-.5 5-2 6-3-4 1.500-9 1-9-3 0-1.500.8-1.500 0-3.500C12.500 7.500 9 8 8 11z" fill="#0d4d99"/></svg></span>
    <span class="task run"><svg width="22" height="18" viewBox="0 0 22 18"><path d="M0 0h9l1.500 2H22v16H0z" fill="#ffd665"/><path d="M0 0h9l1.500 2-1 1.500H0z" fill="#e0a010"/><path d="M4 18v-7q0-1 1-1h12q1 0 1 1v7h-4v-4H8v4z" fill="#3c93dc"/></svg></span>
    <span class="task"><svg width="24" height="24" viewBox="0 0 24 24"><path d="M6.500 7V2h11v5" fill="none" stroke="#1a9cf0" stroke-width="2.500"/><path d="M.5 5h23v16a3 3 0 0 1-3 3h-17a3 3 0 0 1-3-3z" fill="#f3f3f3"/><path d="M7.500 9.500h4v4h-4z" fill="#f25022"/><path d="M12.500 9.500h4v4h-4z" fill="#7fba00"/><path d="M7.500 14.500h4v4h-4z" fill="#00a4ef"/><path d="M12.500 14.500h4v4h-4z" fill="#ffb900"/></svg></span>
    <span class="task run"><svg width="24" height="24" viewBox="0 0 24 24"><path d="M2 5l2 2 3-2 1 1 3-1c-1-3 2-4 3-5 0 4 5 4 7 7 5 8-1 17-9 17S-1 17 2 5z" fill="#ff7b22"/><path d="M12 3c1-2 2-2 2-3 1 3 6 5 7 9 2 6-2 12-5 11 4-5 2-9-2-11-3-1-3-4-2-6z" fill="#ffce3a"/><circle cx="11.500" cy="12.500" r="5" fill="#7a42e8"/><path d="M2 7c3 1 6 0 8 3-2 0-4 2-3 4s6 3 9 1c-1 4-4 6-8 5-6-1-8-7-6-13z" fill="#ff4a45" opacity=".85"/></svg></span>
    <span class="task run"><svg width="24" height="24" viewBox="0 0 24 24"><path d="M0 6l3-2 16 14-2 5L1 9v7l3 2-3 1-1-2z" fill="#7252b8"/><path d="M1 18l3 1L19 7 17 1z" fill="#9066db"/><path d="M17 0l7 3v18l-7 3z" fill="#bd8cf0"/></svg></span>
    <span class="task run"><svg width="23" height="23" viewBox="0 0 23 23"><path d="M11 3h11v17H11z" fill="#fff"/><path d="M13 6h7M13 9h7M13 12h7M13 15h7" stroke="#2b579a"/><path d="M0 2.500L13 0v23L0 20.500z" fill="#2b579a"/><path d="M2.800 8l1.500 7L6.500 8l2.200 7 1.500-7" fill="none" stroke="#fff" stroke-width="1.400"/></svg></span>
    <span class="grow"></span>
    <span class="tray"><svg width="13" height="8" viewBox="0 0 13 8"><path d="M.7 7.300l5.800-6 5.800 6" class="w-line"/></svg></span>
    <span class="tray"><svg width="12" height="17" viewBox="0 0 12 17"><rect x=".5" y="4.500" width="7.500" height="8" rx="1.500" class="w-line"/><path d="M8 7.500l3-2v6l-3-2M1.500 2q4.500-2.500 8 0M1.500 15q4.500 2.500 8 0" class="w-line"/></svg></span>
    <span class="tray"><svg width="17" height="14" viewBox="0 0 17 14"><path d="M4.500 2.500h12v8H5.500M8 13.500h6M11 10.500v3M.5.500h4v4h-4zM2.500 4.500v7h3" class="w-line"/></svg></span>
    <span class="tray"><svg width="17" height="14" viewBox="0 0 17 14"><path d="M.5 5h2.500l3-3.500v11L3 9H.5zM8.500 5q1.200 2 0 4M11 3q2.500 4 0 8M13.500 1q4 6 0 12" class="w-line"/></svg></span>
    <span class="lang">ENG</span>
    <span class="clock">1:34 PM<br>5/23/2023</span>
    <span class="note"><svg width="26" height="26" viewBox="0 0 26 26"><path d="M1 1h16v13H9l-4 4v-4H1z" fill="#fff"/><path d="M4 4.500h10M4 7.500h10M4 10.500h7" stroke="#2d3439"/><circle cx="16.500" cy="16.500" r="8" fill="#3b4247" stroke="#8b9196"/><text x="16.500" y="20.500" text-anchor="middle" class="badge">4</text></svg></span>
    <span class="peek"></span>
  </div>
</div>
</body>
</html>
```
FILE: styles.css
```css
* { box-sizing: border-box; }
body { margin: 0; font-family: "Liberation Sans", Arial, sans-serif; background: #fff; overflow: hidden; }
svg { display: block; flex: none; }
.grow { flex: 1; }
.w-line { fill: none; stroke: #f2f2f2; stroke-width: 1.1; }
.g-line { fill: none; stroke: #9b9b9b; stroke-width: 1.1; }
.r { stroke-linejoin: round; stroke-linecap: round; }
.grn { fill: none; stroke: #03d274; stroke-width: 1.5; stroke-linejoin: round; }
.grn.thin { stroke-width: 1.5; }
.grn.wide { stroke-width: 2.8; }

.window { width: 1920px; height: 1080px; display: flex; flex-direction: column; }
.cell { display: flex; align-items: center; justify-content: center; flex: none; }

/* browser chrome */
.titlebar { height: 32px; background: #202020; display: flex; font-family: "Open Sans", sans-serif; }
.tab-menu { width: 47px; }
.tab { width: 240px; background: #3b3b3b; border-radius: 5px 5px 0 0; display: flex; align-items: center; padding: 0 11px 0 11px; }
.tab-title { color: #fff; font-size: 11.5px; letter-spacing: -.25px; margin-left: 10px; flex: 1; }
.new-tab { width: 35px; }
.win-btn { width: 46px; }
.toolbar { height: 39px; background: #3b3b3b; border-bottom: 1px solid #6c6a6c; display: flex; align-items: center; }
.back { width: 56px; }
.refresh { width: 32px; margin-right: 12px; }
.address { width: 1582px; flex: none; height: 30px; border-radius: 15px; background: #2b2b2b; display: flex; align-items: center; padding: 0 14px 0 19px; }
.url { color: #949494; font: 13.300px "Open Sans", sans-serif; margin-left: 16px; }
.url b { color: #fff; font-weight: 400; }
.addr-icons { display: flex; gap: 19px; align-items: center; }
.t-fav { width: 56px; }
.t-col { width: 32px; }
.t-ava { width: 60px; }
.t-dots { width: 32px; }
.t-bing { width: 58px; }

.middle { flex: 1; min-height: 0; display: flex; }
.viewport { width: 1866px; display: flex; border-right: 1px solid #5a5a5a; }
.page { width: 1850px; overflow: hidden; flex: none; }
.scroll { flex: 1; background: #fbfbfb; display: flex; flex-direction: column; align-items: center; padding: 7px 0 6px; }
.thumb { width: 9px; height: 411px; border-radius: 5px; background: #8b8b8b; margin-top: 5px; }
.side { width: 54px; background: #3b3b3b; display: flex; flex-direction: column; align-items: center; padding-right: 1px; }
.side span { height: 40.200px; display: flex; align-items: center; justify-content: center; flex: none; }
.side .plus { height: 46px; }
.side .rule { width: 28px; height: 1px; background: #6b6b6b; }
.side .panel { height: 42px; }
.side .gear { height: 42px; padding-bottom: 2px; }

/* site header */
.top { height: 74px; display: flex; padding-left: 35px; }
.logo { width: 648px; display: flex; align-items: flex-start; padding-top: 17px; }
.logo span { font: 700 35px/40px Inter, sans-serif; color: #3c3c46; letter-spacing: -.65px; text-shadow: 1px 2px 2px rgba(0,0,0,.25); }
.top-links { width: 957px; display: grid; grid-template-columns: 189px 102px auto; justify-content: start; color: #777; font-size: 16.500px; line-height: 20px; letter-spacing: .72px; padding-top: 26px; white-space: nowrap; }
.with-icon { display: flex; align-items: flex-start; gap: 6px; }
.with-icon svg { margin-top: 1px; }
.social { display: flex; gap: 13.600px; padding: 23px 0 0 2px; }
.social a { width: 33px; height: 33px; border-radius: 50%; display: flex; justify-content: center; align-items: center; padding-bottom: 3px; }
.fb { background: #3b5998; }
.tw { background: #1da1f2; }
.dr { background: #ea4c89; }
.pi { background: #bd081c; }
.nav { height: 48px; background: #f0f2f1; display: flex; }
.menu { width: 1352px; padding-left: 93.500px; display: grid; grid-template-columns: 227px 102px 105px auto; font-size: 16.500px; line-height: 46px; color: #333; letter-spacing: .62px; white-space: nowrap; }
.search { display: flex; gap: 8px; }
.field { width: 351px; background: #d8d9db; color: #6f757c; font: 15.500px/48px Inter, sans-serif; letter-spacing: 1.200px; padding-left: 16px; }
.go { width: 52px; background: #03d274; display: flex; align-items: center; justify-content: center; padding-bottom: 3px; }
.hero { height: 225px; padding-top: 88px; text-align: center; }
.hero h1 { margin: 0; font-size: 44px; line-height: 52px; color: #2b343c; letter-spacing: .8px; text-shadow: 1px 2px 2px rgba(0,0,0,.25); }
.hero p { margin: 5px 0 0; font-size: 16.500px; line-height: 20px; letter-spacing: 5.050px; color: #777; }

/* map */
.map { position: relative; height: 385px; font-family: Roboto, sans-serif; overflow: hidden; }
.label text, .river text { font-family: Roboto, sans-serif; }
.label { font-size: 44px; paint-order: stroke; stroke: #fff; stroke-width: 7px; stroke-linejoin: round; }
.label .sub, .label.sub { font-size: 37px; }
.label .med { font-weight: 500; }
.green { fill: #188038; }
.blue { fill: #1a73e8; }
.navy { fill: #185abc; }
.slate { fill: #546e7a; }
.crimson { fill: #b31412; }
.red { fill: #d93025; }
.teal { fill: #12858d; }
.city { fill: #202124; font-size: 66px; font-weight: 500; }
.street { font-size: 34px; fill: #5f6368; }
.river { font-size: 38px; fill: #185abc; }
.shield { font: 700 29px Roboto, sans-serif; fill: #fff; }
.google { font: 700 50px Lato, sans-serif; paint-order: stroke; stroke: #fff; stroke-width: 8px; }
.place-card { position: absolute; left: 11px; top: 11px; width: 332px; height: 131px; background: #fff; border-radius: 2px; box-shadow: 0 1px 4px rgba(0,0,0,.3); display: flex; padding: 11px 21px 0 13px; font-size: 13.200px; }
.place-card a { color: #1a73e8; }
.place-info { flex: 1; }
.place-info h2 { margin: 0; font: 500 15px/20px Roboto, sans-serif; color: #111; }
.place-info p { margin: 7px 0 0; color: #5b5b5b; line-height: 16px; font-size: 13.250px; white-space: nowrap; }
.rating { display: flex; align-items: center; margin-top: 4px; height: 18px; }
.rating b { font: 500 14.500px Roboto, sans-serif; color: #555; margin-right: 4px; letter-spacing: .2px; }
.rating a { margin-left: 13px; padding-top: 2px; }
.larger { display: block; margin-top: 13px; line-height: 16px; }
.directions { display: flex; flex-direction: column; align-items: center; gap: 7px; padding-top: 4px; }
.tooltip { position: absolute; left: 1034px; top: 111px; width: 100px; height: 37px; background: #fff; box-shadow: 0 1px 4px rgba(0,0,0,.4); text-align: center; font: 500 14px/36px Roboto, sans-serif; color: #222; }
.satellite { position: absolute; left: 11px; top: 327px; border: 2px solid #fff; border-radius: 2px; box-shadow: 0 1px 4px rgba(0,0,0,.5); }
.zoom { position: absolute; left: 1795px; top: 270px; background: #fff; border-radius: 2px; box-shadow: 0 1px 4px rgba(0,0,0,.3); }
.credits { position: absolute; right: 0; bottom: 0; display: flex; font-size: 11px; line-height: 15px; color: #000; gap: 1px; }
.credits span { background: rgba(245,245,245,.75); padding: 0 6.500px 0 6px; }

/* contact details */
.contacts { margin-top: 6px; height: 195px; background: #f0f2f1; display: grid; grid-template-columns: 418px 418px auto; padding: 71px 0 0 351px; }
.contact { display: flex; }
.c-icon { width: 102.500px; padding-top: 1px; }
.i2 { padding: 4px 0 0 1px; }
.i3 { padding: 1px 0 0 7px; }
.contact h3 { margin: 0; font: 400 18px/22px "Liberation Sans", sans-serif; letter-spacing: .8px; color: #222; }
.contact p { margin: 4px 0 0; font: 300 16.300px/24px Inter, sans-serif; letter-spacing: 1.100px; color: #35899a; white-space: nowrap; }
.contact p.mail { letter-spacing: 1.450px; }
.contact p.phone { letter-spacing: .550px; }
.mail-label { font: 16.500px "Liberation Sans", sans-serif; letter-spacing: .6px; }
.contact p a { color: #1f3a48; }

/* taskbar */
.taskbar { height: 40px; background: linear-gradient(90deg, #1d1f20, #212429 12%, #222931 17%, #1d1d1d 23%, #1e1f20 60%, #263139 73%, #2e3539 85%, #2d353b); display: flex; align-items: center; color: #fff; font-family: "Open Sans", sans-serif; }
.task { width: 49px; height: 40px; display: flex; align-items: center; justify-content: center; position: relative; flex: none; }
.task.narrow { width: 48px; }
.task.run::after { content: ""; position: absolute; left: 5px; right: 4px; bottom: 0; height: 2px; background: #f8bd86; }
.task.active { background: #50575b; width: 48px; margin-left: 3px; }
.task.active::after { left: 0; right: 0; }
.tray { width: 24px; display: flex; justify-content: center; flex: none; }
.lang { width: 34px; text-align: center; font-size: 11.500px; }
.clock { width: 66px; text-align: center; font-size: 11.500px; line-height: 18px; letter-spacing: -.2px; }
.note { width: 48px; padding: 3px 0 0 11px; }
.peek { width: 5px; height: 40px; border-left: 1px solid #6d7276; }
.badge { font: 700 11px "Open Sans", sans-serif; fill: #fff; }
```
